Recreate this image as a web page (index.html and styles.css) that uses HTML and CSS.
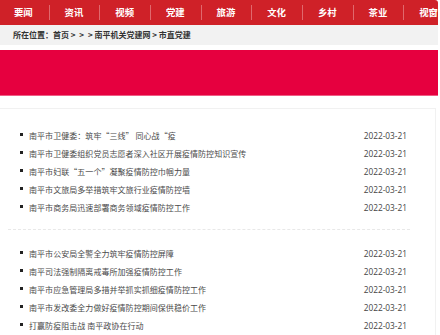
FILE: index.html
```html
<!DOCTYPE html>
<html lang="zh-CN">
<head>
    <meta charset="UTF-8">
    <meta name="viewport" content="width=device-width, initial-scale=1.0">
    <title>市直党建 - 南平机关党建网</title>
    <link rel="stylesheet" href="styles.css">
</head>
<body>
    <div class="page">
        <div class="nav">
            <a href="#">要闻</a>
            <a href="#">资讯</a>
            <a href="#">视频</a>
            <a href="#">党建</a>
            <a href="#">旅游</a>
            <a href="#">文化</a>
            <a href="#">乡村</a>
            <a href="#">茶业</a>
            <a href="#">视窗</a>
        </div>

        <div class="crumb">所在位置：<a href="#">首页</a> <span class="sep">&gt; &gt; &gt;</span> <a href="#">南平机关党建网</a> &gt; <a href="#">市直党建</a></div>

        <div class="banner"></div>

        <div class="box">
            <div class="group">
                <ul>
                    <li><a href="#">南平市卫健委：筑牢“三线” 同心战“疫</a><span>2022-03-21</span></li>
                    <li><a href="#">南平市卫健委组织党员志愿者深入社区开展疫情防控知识宣传</a><span>2022-03-21</span></li>
                    <li><a href="#">南平市妇联“五一个”凝聚疫情防控巾帼力量</a><span>2022-03-21</span></li>
                    <li><a href="#">南平市文旅局多举措筑牢文旅行业疫情防控墙</a><span>2022-03-21</span></li>
                    <li><a href="#">南平市商务局迅速部署商务领域疫情防控工作</a><span>2022-03-21</span></li>
                </ul>
            </div>
            <div class="group last">
                <ul>
                    <li><a href="#">南平市公安局全警全力筑牢疫情防控屏障</a><span>2022-03-21</span></li>
                    <li><a href="#">南平司法强制隔离戒毒所加强疫情防控工作</a><span>2022-03-21</span></li>
                    <li><a href="#">南平市应急管理局多措并举抓实抓细疫情防控工作</a><span>2022-03-21</span></li>
                    <li><a href="#">南平市发改委全力做好疫情防控期间保供稳价工作</a><span>2022-03-21</span></li>
                    <li><a href="#">打赢防疫阻击战 南平政协在行动</a><span>2022-03-21</span></li>
                </ul>
            </div>
        </div>
    </div>
</body>
</html>
```

FILE: styles.css
```css
body { margin: 0; padding: 0; font-family: "Noto Sans CJK SC", "Noto Sans", sans-serif; color: #333; background: #fff; }
a { color: inherit; text-decoration: none; }
.page { width: 438px; overflow: hidden; }

.nav { display: flex; height: 25px; background-color: #cf2128; border-top-right-radius: 3px; overflow: hidden; }
.nav a { flex: 0 0 50.67px; position: relative; text-align: center; line-height: 25px; font-size: 9.4px; font-weight: bold; color: #fff; }
.nav a:first-child { margin-left: -2px; }
.nav a + a::before { content: ""; position: absolute; left: 0; top: 5px; height: 15px; border-left: 1px solid #e0686d; }

.crumb { height: 20px; line-height: 20px; background-color: #f2f2f2; padding-left: 13px; font-size: 8px; font-weight: bold; color: #333; }
.crumb .sep { word-spacing: 2px; }

.banner { height: 45px; margin-top: 5px; background-color: #e6003f; border-bottom: 1px solid #ef5d85; }

.box { margin-top: 12px; width: 435px; border: 1px solid #f1f1f1; border-left: none; border-bottom: none; }
.group { margin: 0 25px 0 8px; padding: 17px 0 13px; border-bottom: 1px dashed #e8e8e8; }
.group.last { border-bottom: none; padding-top: 14px; }
ul { list-style: none; margin: 0; padding: 0 0 0 12px; }
li { display: flex; justify-content: space-between; align-items: center; height: 18px; padding-right: 3px; font-size: 8px; color: #4a4a4a; }
li a { position: relative; padding-left: 9px; white-space: nowrap; letter-spacing: 0.05px; }
li a::before { content: ""; position: absolute; left: 0; top: 50%; width: 3px; height: 3px; margin-top: -2px; background: #222; }
li span { font-family: "Open Sans", sans-serif; font-size: 8.3px; color: #444; }
```
